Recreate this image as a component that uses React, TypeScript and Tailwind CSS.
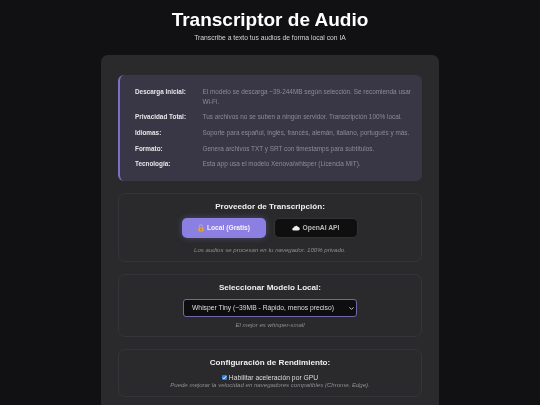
import { ChevronDown } from 'lucide-react'

const infoRows = [
  { label: 'Descarga Inicial:', text: 'El modelo se descarga ~39-244MB según selección. Se recomienda usar Wi-Fi.' },
  { label: 'Privacidad Total:', text: 'Tus archivos no se suben a ningún servidor. Transcripción 100% local.' },
  { label: 'Idiomas:', text: 'Soporte para español, inglés, francés, alemán, italiano, portugués y más.' },
  { label: 'Formato:', text: 'Genera archivos TXT y SRT con timestamps para subtítulos.' },
  { label: 'Tecnología:', text: 'Esta app usa el modelo Xenova/whisper (Licencia MIT).' },
]

function LockIcon() {
  return (
    <svg width="6" height="8" viewBox="0 0 7 9" className="shrink-0">
      <path d="M1.5 4V2.6a2 2 0 0 1 4 0V4" fill="none" stroke="#b9b3c9" strokeWidth="0.9" />
      <rect x="0.5" y="3.8" width="6" height="4.7" rx="0.8" fill="#e0a63a" />
      <rect x="3" y="5.3" width="1" height="1.8" fill="#8a5e17" />
    </svg>
  )
}

function CloudIcon() {
  return (
    <svg width="8" height="6" viewBox="0 0 10 7" className="shrink-0">
      <path d="M2.2 6.6a1.7 1.7 0 0 1-.3-3.4A2.1 2.1 0 0 1 4 1.2 2.4 2.4 0 0 1 7.4 2.4a2.1 2.1 0 0 1 .5 4.2z" fill="#eeeeee" />
    </svg>
  )
}

function Section({ title, className, children }: { title: string; className: string; children: React.ReactNode }) {
  return (
    <section className={`border border-[#353539] rounded-[7px] flex flex-col items-center ${className}`}>
      <h3 className="text-[8.1px] leading-[10px] font-bold text-[#eeeeee]">{title}</h3>
      {children}
    </section>
  )
}

export default function App() {
  return (
    <div className="h-[405px] overflow-hidden bg-[#111113] [font-family:'Liberation_Sans',Arial,sans-serif] [will-change:transform]">
      <header className="pt-[7.5px] text-center">
        <h1 className="text-[19px] leading-[24px] font-bold text-white">Transcriptor de Audio</h1>
        <p className="mt-[1.7px] text-[6.76px] leading-[9px] text-[#d4d4d4]">Transcribe a texto tus audios de forma local con IA</p>
      </header>

      <main className="mt-[12.5px] mx-auto w-[338px] h-[400px] bg-[#2a2a2c] rounded-t-[7px] px-[17px] pt-[20.5px]">
        <div className="h-[106px] rounded-[6px] border-l-2 border-[#7a70c4] bg-[#393745] pl-[15px] pr-[9px] pt-[11.5px] flex flex-col gap-[5.4px]">
          {infoRows.map(row => (
            <div key={row.label} className="flex">
              <div className="w-[67.5px] shrink-0 text-[6.4px] leading-[10.2px] font-bold text-[#e6e6e8]">{row.label}</div>
              <div className="text-[6.4px] leading-[10.2px] text-[#8c8b95]">{row.text}</div>
            </div>
          ))}
        </div>

        <Section title="Proveedor de Transcripción:" className="mt-[12px] h-[69px] pt-[7.5px]">
          <div className="mt-[6.3px] flex gap-[7.5px]">
            <button className="w-[84px] h-[20px] rounded-[5px] bg-[#8b80e2] shadow-[0_0_6px_rgba(139,128,226,0.35)] flex items-center justify-center gap-[2.5px] text-[6.7px] font-bold text-[#f3f2fb]">
              <LockIcon />
              Local (Gratis)
            </button>
            <button className="w-[84px] h-[20px] rounded-[5px] bg-[#0f0f10] border border-[#333336] flex items-center justify-center gap-[2.5px] text-[6.76px] font-bold text-[#b8b8ba]">
              <CloudIcon />
              OpenAI API
            </button>
          </div>
          <p className="mt-[8px] text-[6.08px] leading-[8px] italic text-[#8e8e90]">Los audios se procesan en tu navegador. 100% privado.</p>
        </Section>

        <Section title="Seleccionar Modelo Local:" className="mt-[12px] h-[63px] pt-[8px]">
          <div className="mt-[6.3px] w-[174px] h-[18px] rounded-[3px] border border-[#6f68a8] bg-[#0e0e10] flex items-center justify-between pl-[8px] pr-[1px]">
            <span className="text-[6.76px] text-[#dedede]">Whisper Tiny (~39MB - Rápido, menos preciso)</span>
            <ChevronDown size={7} strokeWidth={3} className="text-[#dddddd]" />
          </div>
          <p className="mt-[3.7px] text-[6.08px] leading-[8px] italic text-[#8e8e90]">El mejor es whisper-small</p>
        </Section>

        <Section title="Configuración de Rendimiento:" className="mt-[12px] h-[48px] pt-[8px]">
          <label className="mt-[4.8px] flex items-center gap-[1.5px] text-[6.76px] leading-[9px] text-[#dcdcdc]">
            <span className="w-[5.5px] h-[5.5px] rounded-[1px] bg-[#2f7de1] flex items-center justify-center">
              <svg width="5" height="5" viewBox="0 0 5 5">
                <path d="M0.8 2.6l1.2 1.2L4.2 1.2" fill="none" stroke="#ffffff" strokeWidth="1" />
              </svg>
            </span>
            Habilitar aceleración por GPU
          </label>
          <p className="mt-[-0.8px] text-[6.08px] leading-[8px] italic text-[#8e8e90]">Puede mejorar la velocidad en navegadores compatibles (Chrome, Edge).</p>
        </Section>
      </main>
    </div>
  )
}
